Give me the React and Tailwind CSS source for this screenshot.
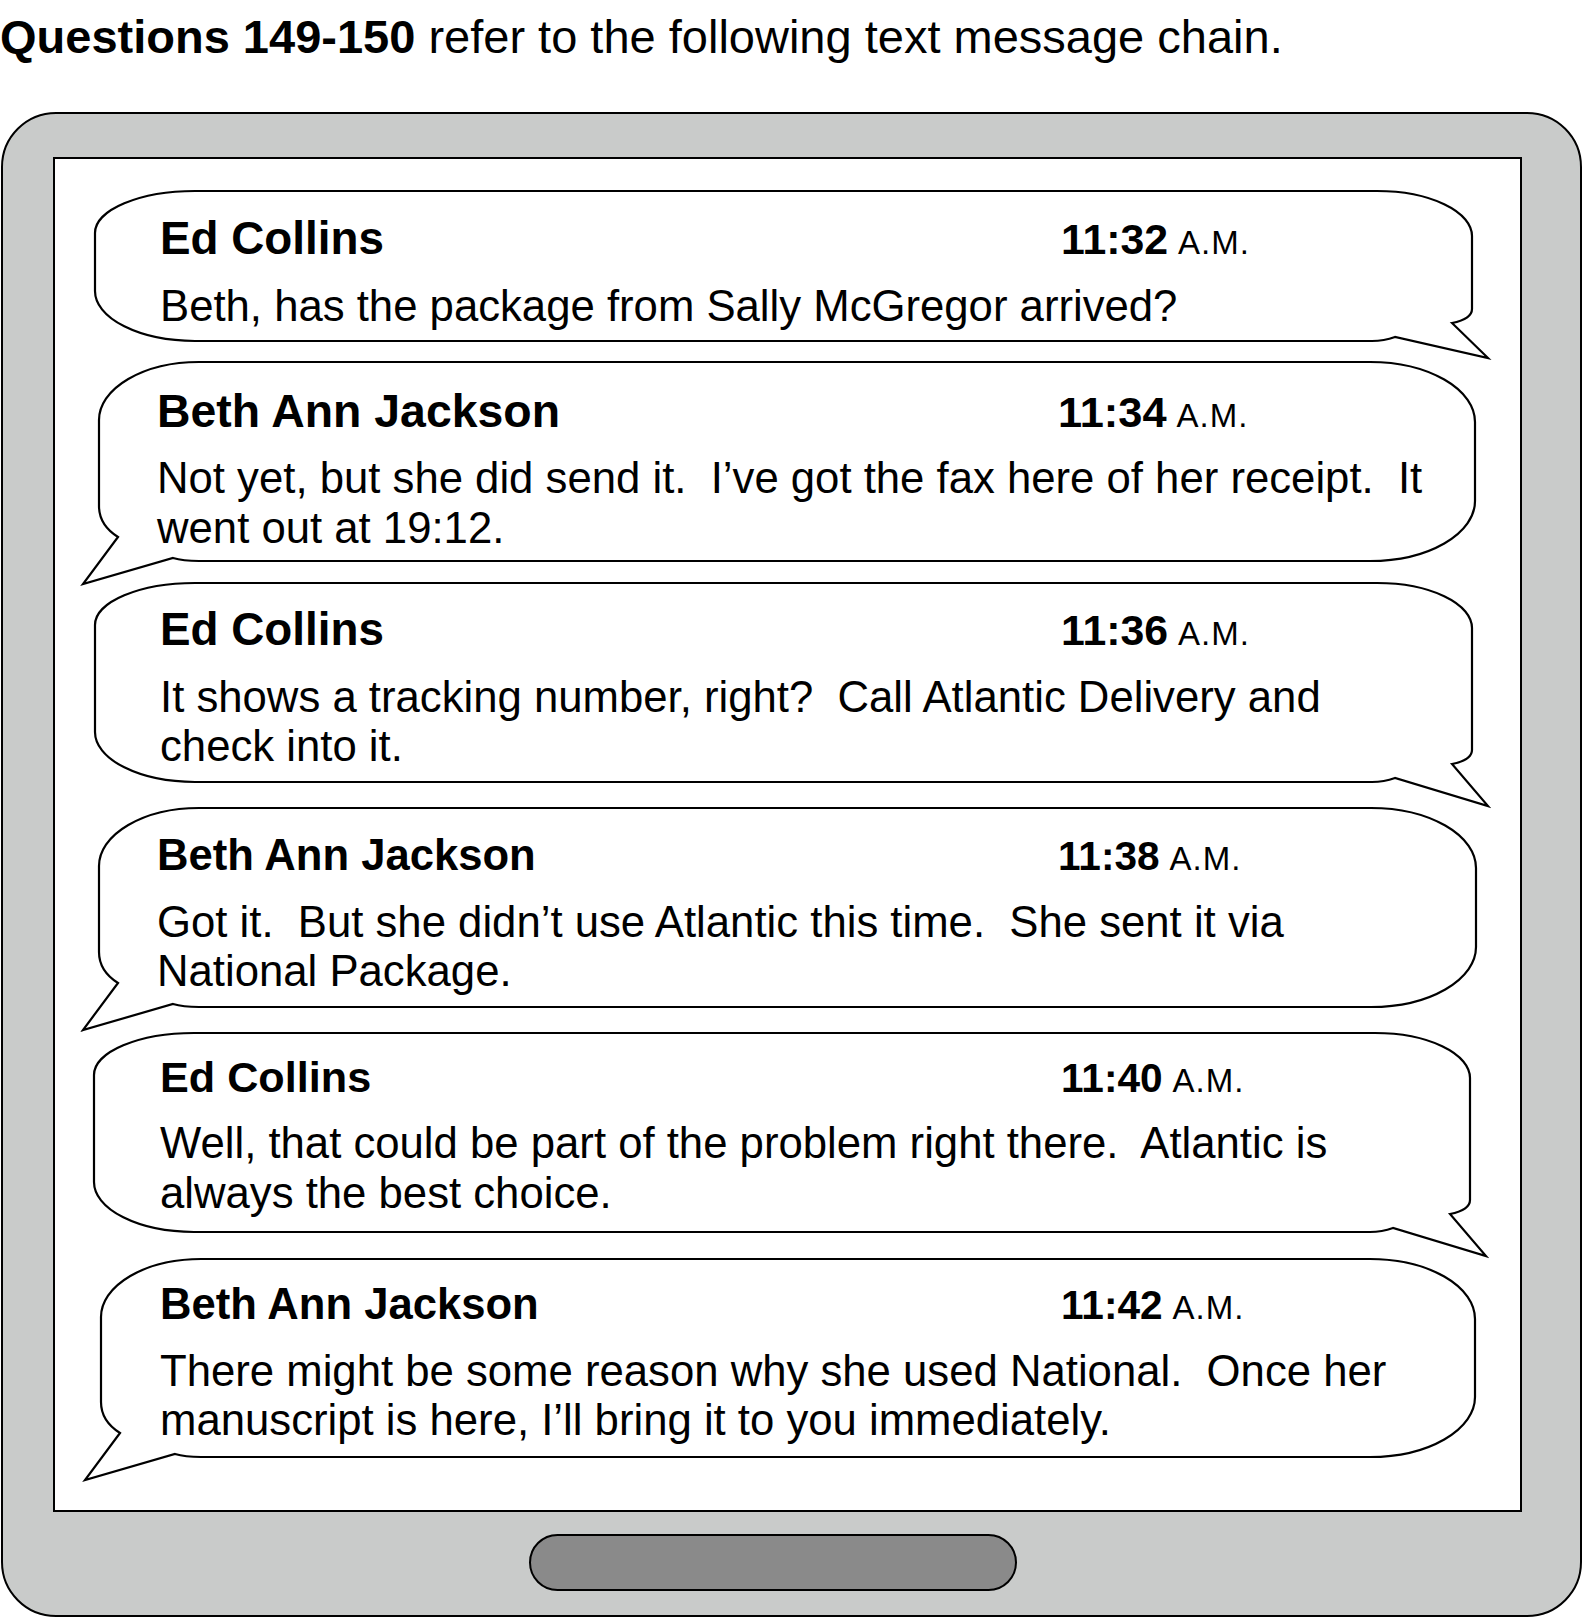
import React from 'react';

// text chain shown inside a tablet frame
const MESSAGES = [
  {
    name: 'Ed Collins',
    time: '11:32',
    lines: ['Beth, has the package from Sally McGregor arrived?'],
    side: 'right',
    w: 1377,
    h: 150,
    tip: 17,
    box: 'mt-[32px] ml-[40px] w-[1377px] h-[150px]',
    pad: 'pl-[65px] pt-[25px]',
    nameSize: 'text-[45.8px]',
    timeSize: 'text-[42.8px]',
  },
  {
    name: 'Beth Ann Jackson',
    time: '11:34',
    lines: ['Not yet, but she did send it.  I’ve got the fax here of her receipt.  It', 'went out at 19:12.'],
    side: 'left',
    w: 1376,
    h: 199,
    tip: 23,
    box: 'mt-[21px] ml-[44px] w-[1376px] h-[199px]',
    pad: 'pl-[58px] pt-[26px]',
    nameSize: 'text-[46.4px]',
    timeSize: 'text-[43.4px]',
  },
  {
    name: 'Ed Collins',
    time: '11:36',
    lines: ['It shows a tracking number, right?  Call Atlantic Delivery and', 'check into it.'],
    side: 'right',
    w: 1377,
    h: 199,
    tip: 24,
    box: 'mt-[22px] ml-[40px] w-[1377px] h-[199px]',
    pad: 'pl-[65px] pt-[24px]',
    nameSize: 'text-[45.8px]',
    timeSize: 'text-[42.8px]',
  },
  {
    name: 'Beth Ann Jackson',
    time: '11:38',
    lines: ['Got it.  But she didn’t use Atlantic this time.  She sent it via', 'National Package.'],
    side: 'left',
    w: 1377,
    h: 199,
    tip: 23,
    box: 'mt-[26px] ml-[44px] w-[1377px] h-[199px]',
    pad: 'pl-[58px] pt-[26px]',
    nameSize: 'text-[43.6px]',
    timeSize: 'text-[40.6px]',
  },
  {
    name: 'Ed Collins',
    time: '11:40',
    lines: ['Well, that could be part of the problem right there.  Atlantic is', 'always the best choice.'],
    side: 'right',
    w: 1376,
    h: 199,
    tip: 24,
    box: 'mt-[26px] ml-[39px] w-[1376px] h-[199px]',
    pad: 'pl-[66px] pt-[23px]',
    nameSize: 'text-[43.2px]',
    timeSize: 'text-[40.6px]',
  },
  {
    name: 'Beth Ann Jackson',
    time: '11:42',
    lines: ['There might be some reason why she used National.  Once her', 'manuscript is here, I’ll bring it to you immediately.'],
    side: 'left',
    w: 1374,
    h: 198,
    tip: 23,
    box: 'mt-[27px] ml-[46px] w-[1374px] h-[198px]',
    pad: 'pl-[59px] pt-[24px]',
    nameSize: 'text-[43.6px]',
    timeSize: 'text-[40.6px]',
  },
];

function rightPath(w, h, t) {
  return `M100 0 H${w - 95} A95 45 0 0 1 ${w} 45 V${h - 32} Q${w} ${h - 22} ${w - 20} ${h - 18} L${w + 16} ${h + t} L${w - 77} ${h - 4} Q${w - 88} ${h} ${w - 100} ${h} H100 A100 50 0 0 1 0 ${h - 50} V42 A100 42 0 0 1 100 0 Z`;
}

function leftPath(w, h, t) {
  return `M100 0 H${w - 105} A105 60 0 0 1 ${w} 60 V${h - 60} A105 60 0 0 1 ${w - 105} ${h} H100 Q84 ${h} 74 ${h - 3} L-16 ${h + t} L19 ${h - 24} Q0 ${h - 36} 0 ${h - 55} V58 A100 58 0 0 1 100 0 Z`;
}

function Bubble({ msg }) {
  const d = msg.side === 'right' ? rightPath(msg.w, msg.h, msg.tip) : leftPath(msg.w, msg.h, msg.tip);
  return (
    <div className={`relative ${msg.box}`}>
      <svg className="absolute left-0 top-0 overflow-visible" width={msg.w} height={msg.h}>
        <path d={d} fill="#fff" stroke="#000" strokeWidth="2.2" strokeLinejoin="miter" />
      </svg>
      <div className={`relative ${msg.pad}`}>
        <div className="flex items-baseline leading-none">
          <div className={`w-[901px] font-bold ${msg.nameSize}`}>{msg.name}</div>
          <div className={`font-bold ${msg.timeSize}`}>{msg.time}</div>
          <div className="ml-[10px] text-[33px] tracking-[0.03em]">A.M.</div>
        </div>
        <div className="mt-[19px] text-[43.7px] leading-[49.5px]">
          {msg.lines.map((line, i) => (
            <div key={i} className="whitespace-pre">{line}</div>
          ))}
        </div>
      </div>
    </div>
  );
}

export default function App() {
  return (
    <div className="w-[1583px] h-[1619px] bg-white text-black font-['Liberation_Sans',Arial,sans-serif]">
      <div className="pt-[13px] text-[47px] leading-none whitespace-nowrap">
        <span className="font-bold">Questions 149-150</span> refer to the following text message chain.
      </div>
      <div className="mt-[52px] ml-[1px] w-[1581px] h-[1505px] rounded-[55px] border-2 border-black bg-[#c9cbca] pl-[50px] pt-[43px]">
        <div className="w-[1469px] h-[1355px] border-2 border-black bg-white">
          {MESSAGES.map((m, i) => (
            <Bubble key={i} msg={m} />
          ))}
        </div>
        <div className="mt-[22px] ml-[476px] w-[488px] h-[57px] rounded-full border-2 border-black bg-[#8a8a8a]" />
      </div>
    </div>
  );
}
